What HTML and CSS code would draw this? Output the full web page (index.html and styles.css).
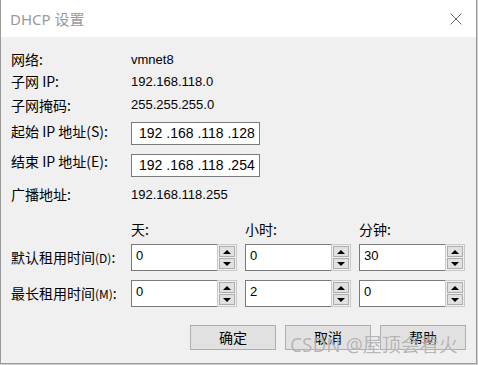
FILE: index.html
```html
<!DOCTYPE html>
<html lang="zh-CN">
<head>
    <meta charset="UTF-8">
    <meta name="viewport" content="width=device-width, initial-scale=1.0">
    <title>DHCP 设置</title>
    <link rel="stylesheet" href="styles.css">
</head>
<body>
    <div class="dialog">
        <div class="titlebar">
            <span class="title">DHCP 设置</span>
            <svg class="close" width="12" height="12" viewBox="0 0 12 12">
                <path d="M0.5 0.5 L11.5 11.5 M11.5 0.5 L0.5 11.5" stroke="#6a6a6a" stroke-width="1" fill="none"/>
            </svg>
        </div>

        <div class="content">
            <div class="info">
                <span class="label">网络:</span><span class="value">vmnet8</span>
                <span class="label">子网 IP:</span><span class="value">192.168.118.0</span>
                <span class="label">子网掩码:</span><span class="value">255.255.255.0</span>
                <span class="label">起始 IP 地址(S):</span><div class="ip-box">192 .168 .118 .128</div>
                <span class="label">结束 IP 地址(E):</span><div class="ip-box">192 .168 .118 .254</div>
                <span class="label">广播地址:</span><span class="value">192.168.118.255</span>
            </div>

            <!-- lease time -->
            <div class="lease-row header-row">
                <span class="label"></span>
                <span class="col-head">天:</span>
                <span class="col-head">小时:</span>
                <span class="col-head">分钟:</span>
            </div>
            <div class="lease-row">
                <span class="label">默认租用时间<small>(D)</small>:</span>
                <div class="spin"><div class="edit">0</div><div class="arrows"><span class="up"></span><span class="down"></span></div></div>
                <div class="spin"><div class="edit">0</div><div class="arrows"><span class="up"></span><span class="down"></span></div></div>
                <div class="spin"><div class="edit">30</div><div class="arrows"><span class="up"></span><span class="down"></span></div></div>
            </div>
            <div class="lease-row second">
                <span class="label">最长租用时间<small>(M)</small>:</span>
                <div class="spin"><div class="edit">0</div><div class="arrows"><span class="up"></span><span class="down"></span></div></div>
                <div class="spin"><div class="edit">2</div><div class="arrows"><span class="up"></span><span class="down"></span></div></div>
                <div class="spin"><div class="edit">0</div><div class="arrows"><span class="up"></span><span class="down"></span></div></div>
            </div>

            <div class="buttons">
                <div class="btn">确定</div>
                <div class="btn">取消</div>
                <div class="btn">帮助</div>
            </div>
        </div>

        <div class="watermark">CSDN @屋顶会看火</div>
    </div>
</body>
</html>
```

FILE: styles.css
```css
:root {
    --face: #f0f0f0;
    --edge: #7a7a7a;
    --btn-bg: #e1e1e1;
    --btn-border: #adadad;
}

* {
    box-sizing: border-box;
}

body {
    margin: 0;
    background: #cfcfcf;
    font-family: "Noto Sans CJK SC", "Noto Sans", sans-serif;
    font-size: 14px;
    color: #000;
}

.dialog {
    position: relative;
    width: 477px;
    height: 364px;
    background: var(--face);
    border: 1px solid #9a9a9a;
    border-top: none;
}

.titlebar {
    height: 37px;
    background: #fff;
    display: flex;
    align-items: center;
    justify-content: space-between;
    padding: 0 14px 0 9px;
}

.title {
    font-family: "Noto Sans", "Noto Sans CJK SC", sans-serif;
    font-size: 15px;
    color: #9a9a9a;
}

.close {
    margin-top: 1px;
}

.content {
    padding: 11px 10px 0 10px;
}

.info {
    display: grid;
    grid-template-columns: 120px auto;
    grid-template-rows: 22px 22px 25px 28px 32px 34px;
    align-items: center;
}

.label {
    line-height: 18px;
    white-space: nowrap;
}

.label small {
    font-size: 12px;
}

.value {
    font-family: "Liberation Sans", Arial, sans-serif;
    font-size: 13px;
}

.ip-box {
    align-self: end;
    width: 129px;
    height: 23px;
    background: #fff;
    border: 1px solid var(--edge);
    padding-left: 7px;
    font-family: "Liberation Sans", Arial, sans-serif;
    font-size: 14px;
    line-height: 21px;
}

.lease-row {
    display: flex;
    align-items: center;
    gap: 8px;
    height: 27px;
}

.lease-row .label {
    width: 112px;
}

.header-row {
    height: 33px;
    padding-top: 3px;
}

.col-head {
    width: 106px;
}

.second {
    margin-top: 9px;
}

.spin {
    display: flex;
    width: 106px;
    height: 27px;
}

.edit {
    width: 86px;
    height: 27px;
    background: #fff;
    border: 1px solid var(--edge);
    border-right: none;
    padding: 2px 0 0 4px;
    font-family: "Liberation Sans", Arial, sans-serif;
    font-size: 13px;
    line-height: 17px;
}

.arrows {
    width: 20px;
    height: 27px;
    border: 1px solid #c9c9c9;
    padding: 1px;
    display: flex;
    flex-direction: column;
    gap: 1px;
}

.arrows span {
    flex: 1;
    background: var(--btn-bg);
    border: 1px solid var(--btn-border);
    display: flex;
    align-items: center;
    justify-content: center;
}

.arrows .up::before {
    content: '';
    border-left: 4px solid transparent;
    border-right: 4px solid transparent;
    border-bottom: 4px solid #000;
}

.arrows .down::before {
    content: '';
    border-left: 4px solid transparent;
    border-right: 4px solid transparent;
    border-top: 4px solid #000;
}

.buttons {
    display: flex;
    justify-content: flex-end;
    gap: 9px;
    margin-top: 18px;
}

.btn {
    width: 86px;
    height: 25px;
    background: var(--btn-bg);
    border: 1px solid var(--btn-border);
    text-align: center;
    line-height: 22px;
}

.watermark {
    position: absolute;
    left: 289px;
    top: 334px;
    font-family: "Noto Sans", "Noto Sans CJK SC", sans-serif;
    font-size: 19px;
    line-height: 22px;
    color: rgba(120, 120, 120, 0.55);
    text-shadow: 0 0 1px rgba(255, 255, 255, 0.9);
    white-space: nowrap;
}
```
